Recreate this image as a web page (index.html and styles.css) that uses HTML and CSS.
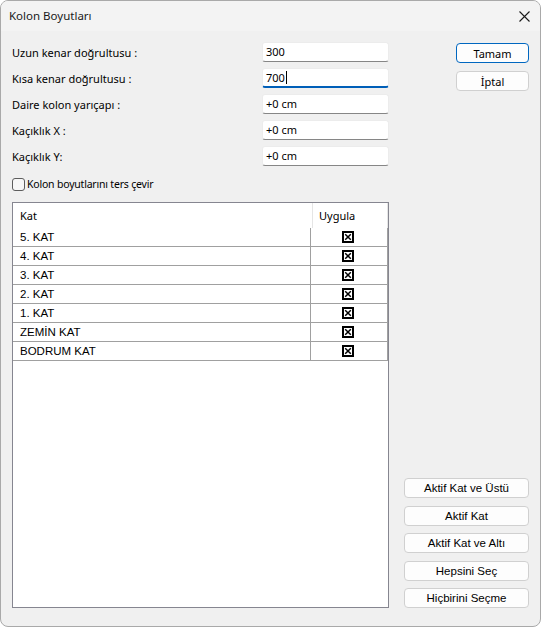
FILE: index.html
```html
<!DOCTYPE html>
<html lang="tr">
<head>
    <meta charset="UTF-8">
    <meta name="viewport" content="width=device-width, initial-scale=1.0">
    <title>Kolon Boyutları</title>
    <link rel="stylesheet" href="styles.css">
</head>
<body>
    <div class="window">
        <div class="titlebar">
            <span class="title">Kolon Boyutları</span>
            <svg class="close" width="11" height="11" viewBox="0 0 11 11">
                <path d="M0.5 0.5 L10.5 10.5 M10.5 0.5 L0.5 10.5" stroke="#1a1a1a" stroke-width="1.1" fill="none"/>
            </svg>
        </div>
        <div class="body">
            <div class="main">
                <div class="field">
                    <span class="label">Uzun kenar doğrultusu :</span>
                    <div class="textbox">300</div>
                </div>
                <div class="field">
                    <span class="label">Kısa kenar doğrultusu :</span>
                    <div class="textbox focused">700<span class="caret"></span></div>
                </div>
                <div class="field">
                    <span class="label">Daire kolon yarıçapı :</span>
                    <div class="textbox">+0 cm</div>
                </div>
                <div class="field">
                    <span class="label">Kaçıklık X :</span>
                    <div class="textbox">+0 cm</div>
                </div>
                <div class="field">
                    <span class="label">Kaçıklık Y:</span>
                    <div class="textbox">+0 cm</div>
                </div>
                <div class="check">
                    <span class="box"></span>
                    <span class="check-text">Kolon boyutlarını ters çevir</span>
                </div>
                <div class="list">
                    <div class="list-head">
                        <div class="head-kat">Kat</div>
                        <div class="head-uygula">Uygula</div>
                    </div>
                    <div class="list-row"><div class="cell">5. KAT</div><div class="cell mark"><svg width="12" height="12" viewBox="0 0 12 12"><rect x="1" y="1" width="10" height="10" fill="none" stroke="#000" stroke-width="2"/><path d="M3.2 3.2 L8.8 8.8 M8.8 3.2 L3.2 8.8" stroke="#000" stroke-width="1.5"/></svg></div></div>
                    <div class="list-row"><div class="cell">4. KAT</div><div class="cell mark"><svg width="12" height="12" viewBox="0 0 12 12"><rect x="1" y="1" width="10" height="10" fill="none" stroke="#000" stroke-width="2"/><path d="M3.2 3.2 L8.8 8.8 M8.8 3.2 L3.2 8.8" stroke="#000" stroke-width="1.5"/></svg></div></div>
                    <div class="list-row"><div class="cell">3. KAT</div><div class="cell mark"><svg width="12" height="12" viewBox="0 0 12 12"><rect x="1" y="1" width="10" height="10" fill="none" stroke="#000" stroke-width="2"/><path d="M3.2 3.2 L8.8 8.8 M8.8 3.2 L3.2 8.8" stroke="#000" stroke-width="1.5"/></svg></div></div>
                    <div class="list-row"><div class="cell">2. KAT</div><div class="cell mark"><svg width="12" height="12" viewBox="0 0 12 12"><rect x="1" y="1" width="10" height="10" fill="none" stroke="#000" stroke-width="2"/><path d="M3.2 3.2 L8.8 8.8 M8.8 3.2 L3.2 8.8" stroke="#000" stroke-width="1.5"/></svg></div></div>
                    <div class="list-row"><div class="cell">1. KAT</div><div class="cell mark"><svg width="12" height="12" viewBox="0 0 12 12"><rect x="1" y="1" width="10" height="10" fill="none" stroke="#000" stroke-width="2"/><path d="M3.2 3.2 L8.8 8.8 M8.8 3.2 L3.2 8.8" stroke="#000" stroke-width="1.5"/></svg></div></div>
                    <div class="list-row"><div class="cell">ZEMİN KAT</div><div class="cell mark"><svg width="12" height="12" viewBox="0 0 12 12"><rect x="1" y="1" width="10" height="10" fill="none" stroke="#000" stroke-width="2"/><path d="M3.2 3.2 L8.8 8.8 M8.8 3.2 L3.2 8.8" stroke="#000" stroke-width="1.5"/></svg></div></div>
                    <div class="list-row"><div class="cell">BODRUM KAT</div><div class="cell mark"><svg width="12" height="12" viewBox="0 0 12 12"><rect x="1" y="1" width="10" height="10" fill="none" stroke="#000" stroke-width="2"/><path d="M3.2 3.2 L8.8 8.8 M8.8 3.2 L3.2 8.8" stroke="#000" stroke-width="1.5"/></svg></div></div>
                </div>
            </div>
            <div class="side">
                <button class="btn small default">Tamam</button>
                <button class="btn small">İptal</button>
                <div class="side-bottom">
                    <button class="btn wide">Aktif Kat ve Üstü</button>
                    <button class="btn wide">Aktif Kat</button>
                    <button class="btn wide">Aktif Kat ve Altı</button>
                    <button class="btn wide">Hepsini Seç</button>
                    <button class="btn wide">Hiçbirini Seçme</button>
                </div>
            </div>
        </div>
    </div>
</body>
</html>
```

FILE: styles.css
```css
html, body {
    margin: 0;
    padding: 0;
    background: #ffffff;
}
.window {
    box-sizing: border-box;
    width: 541px;
    height: 627px;
    border: 1px solid #a9a9a9;
    border-radius: 8px;
    background: #f0f0f0;
    overflow: hidden;
    display: flex;
    flex-direction: column;
    font-family: "Noto Sans", sans-serif;
    font-size: 11px;
    color: #000;
}
.titlebar {
    height: 30px;
    flex: none;
    display: flex;
    align-items: center;
    justify-content: space-between;
    padding: 0 10px 0 8px;
    background: #f3f3f3;
}
.title {
    font-size: 11.5px;
    color: #1a1a1a;
    margin-top: -1px;
}
.close {
    margin-top: 1px;
}
.body {
    flex: 1;
    display: flex;
    padding: 11px 11px 18px 11px;
}
.main {
    width: 377px;
    display: flex;
    flex-direction: column;
}
.field {
    height: 20px;
    margin-bottom: 6px;
    display: flex;
    align-items: center;
}
.label {
    flex: 1;
}
.textbox {
    box-sizing: border-box;
    width: 127px;
    height: 20px;
    background: #fff;
    border: 1px solid #ececec;
    border-bottom-color: #868686;
    border-radius: 3px;
    padding-left: 3px;
    line-height: 18px;
    display: flex;
    align-items: center;
}
.textbox.focused {
    border-bottom: 2px solid #005fb8;
}
.caret {
    display: inline-block;
    width: 1px;
    height: 13px;
    background: #000;
    margin-left: 1px;
}
.check {
    height: 20px;
    margin-top: 2px;
    display: flex;
    align-items: center;
    gap: 2px;
}
.check-text {
    font-size: 10.5px;
    letter-spacing: -0.2px;
}
.box {
    box-sizing: border-box;
    width: 13px;
    height: 13px;
    border: 1px solid #5d5d5d;
    border-radius: 3px;
    background: #f7f7f7;
}
.list {
    flex: 1;
    margin-top: 8px;
    background: #fff;
    border: 1px solid #868690;
    font-family: "Liberation Sans", Arial, sans-serif;
}
.list-head {
    height: 25px;
    display: flex;
    font-family: "Noto Sans", sans-serif;
    font-size: 11px;
}
.head-kat {
    box-sizing: border-box;
    width: 300px;
    padding-left: 7px;
    line-height: 25px;
    border-right: 1px solid #e5e5e5;
}
.head-uygula {
    box-sizing: border-box;
    width: 75px;
    padding-left: 6px;
    line-height: 25px;
    border-right: 1px solid #e5e5e5;
}
.list-row {
    width: 375px;
    display: grid;
    grid-template-columns: 298px 77px;
    height: 19px;
    box-sizing: border-box;
    border-bottom: 1px solid #a0a0a0;
    font-size: 11.5px;
}
.cell {
    border-right: 1px solid #a0a0a0;
    padding-left: 7px;
    line-height: 18px;
}
.mark {
    padding-left: 0;
    display: flex;
    align-items: center;
    justify-content: center;
    padding-right: 2px;
}
.side {
    flex: 1;
    display: flex;
    flex-direction: column;
    align-items: flex-end;
    padding-top: 1px;
}
.btn {
    box-sizing: border-box;
    height: 20px;
    padding: 0;
    background: #fdfdfd;
    border: 1px solid #d0d0d0;
    border-radius: 4px;
    color: #000;
}
.small {
    width: 73px;
    font-family: "Noto Sans", sans-serif;
    font-size: 11px;
    margin-bottom: 8px;
}
.default {
    border-color: #0067c0;
}
.side-bottom {
    margin-top: auto;
    display: flex;
    flex-direction: column;
    gap: 7.5px;
}
.wide {
    width: 125px;
    font-family: "Liberation Sans", Arial, sans-serif;
    font-size: 11.5px;
}
```
